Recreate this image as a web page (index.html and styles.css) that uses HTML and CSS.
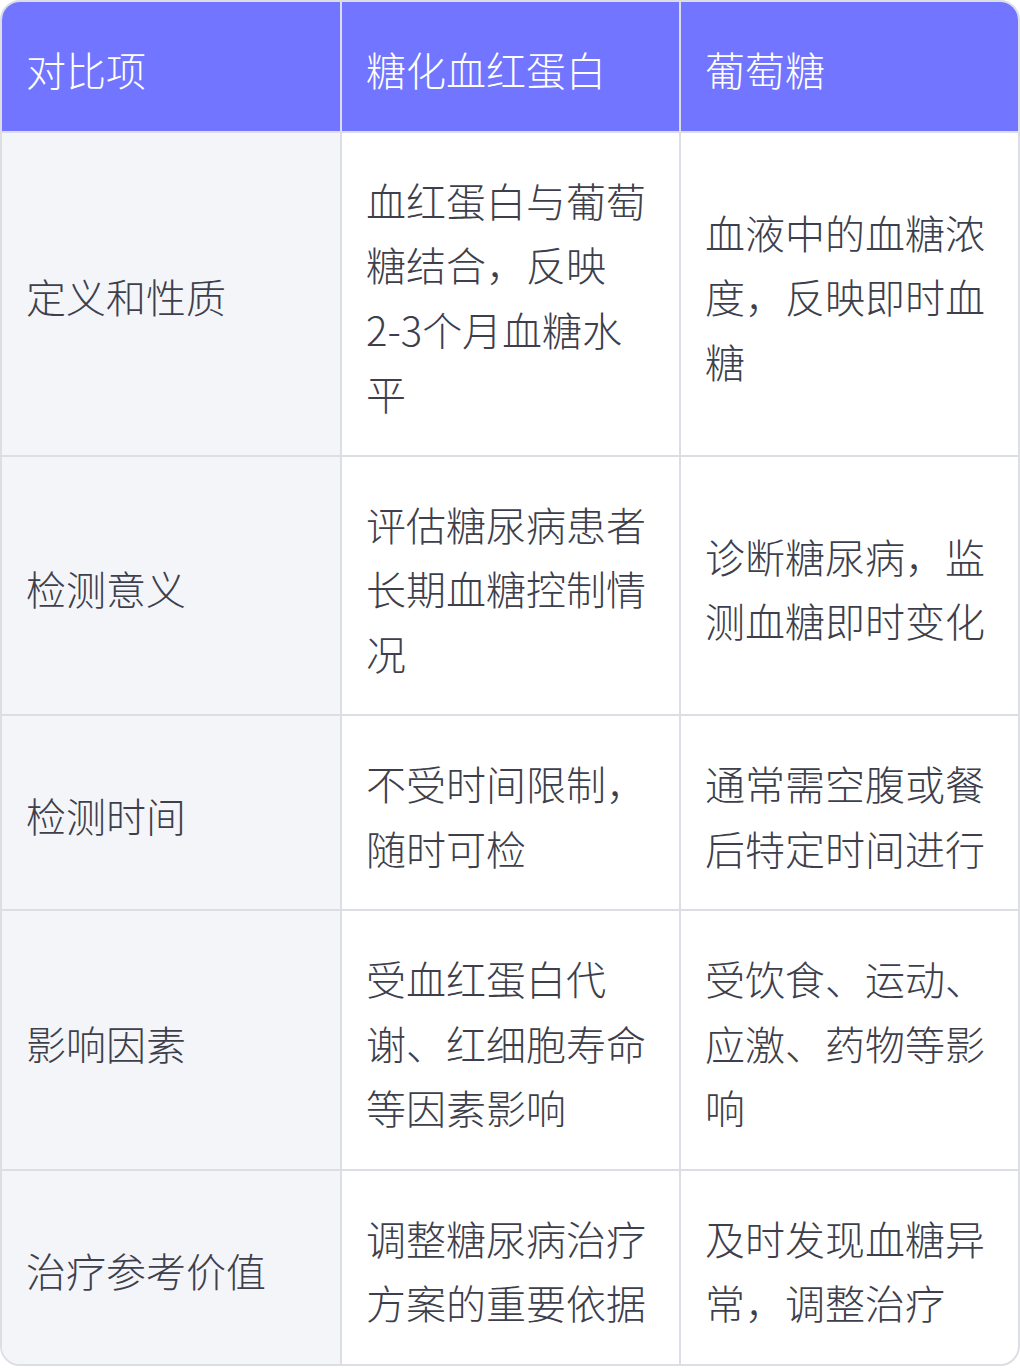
FILE: index.html
```html
<!DOCTYPE html>
<html lang="zh-CN">
<head>
<meta charset="utf-8">
<title>糖化血红蛋白与葡萄糖对比</title>
<link rel="stylesheet" href="styles.css">
</head>
<body>
<div class="table-wrap">
  <table class="compare">
    <colgroup>
      <col class="c1">
      <col class="c2">
      <col class="c3">
    </colgroup>
    <thead>
      <tr>
        <th>对比项</th>
        <th>糖化血红蛋白</th>
        <th>葡萄糖</th>
      </tr>
    </thead>
    <tbody>
      <tr>
        <td>定义和性质</td>
        <td>血红蛋白与葡萄糖结合，反映<span class="nowrap">2-3</span>个月血糖水平</td>
        <td>血液中的血糖浓度，反映即时血糖</td>
      </tr>
      <tr>
        <td>检测意义</td>
        <td>评估糖尿病患者长期血糖控制情况</td>
        <td>诊断糖尿病，监测血糖即时变化</td>
      </tr>
      <tr>
        <td>检测时间</td>
        <td>不受时间限制，随时可检</td>
        <td>通常需空腹或餐后特定时间进行</td>
      </tr>
      <tr>
        <td>影响因素</td>
        <td>受血红蛋白代谢、红细胞寿命等因素影响</td>
        <td>受饮食、运动、应激、药物等影响</td>
      </tr>
      <tr>
        <td>治疗参考价值</td>
        <td>调整糖尿病治疗方案的重要依据</td>
        <td>及时发现血糖异常，调整治疗</td>
      </tr>
    </tbody>
  </table>
</div>
</body>
</html>
```

FILE: styles.css
```css
html, body {
  margin: 0;
  padding: 0;
  background: #ffffff;
}

.table-wrap {
  width: 1020px;
  box-sizing: border-box;
  border: 2px solid #dddee4;
  border-radius: 20px;
  overflow: hidden;
  background: #ffffff;
}

.compare {
  width: 1016px;
  table-layout: fixed;
  border-collapse: separate;
  border-spacing: 0;
  font-family: "Noto Sans CJK SC Light", "Noto Sans CJK SC DemiLight", "Noto Sans CJK SC", "Noto Sans", sans-serif;
  font-weight: 200;
  font-size: 40px;
  line-height: 64.5px;
  color: #3d404c;
}

.c1 { width: 340px; }
.c2 { width: 339px; }
.c3 { width: 337px; }

.compare th,
.compare td {
  padding: 35px 24px 29px;
  text-align: left;
  vertical-align: middle;
  border-right: 2px solid #dddee4;
  border-bottom: 2px solid #dddee4;
}

.nowrap {
  white-space: nowrap;
}

.compare th:last-child,
.compare td:last-child {
  border-right: none;
}

.compare tbody tr:last-child td {
  border-bottom: none;
}

.compare th {
  background: #7175ff;
  color: #ffffff;
  font-weight: 200;
}

.compare td:first-child {
  background: #f4f5f9;
}
```
